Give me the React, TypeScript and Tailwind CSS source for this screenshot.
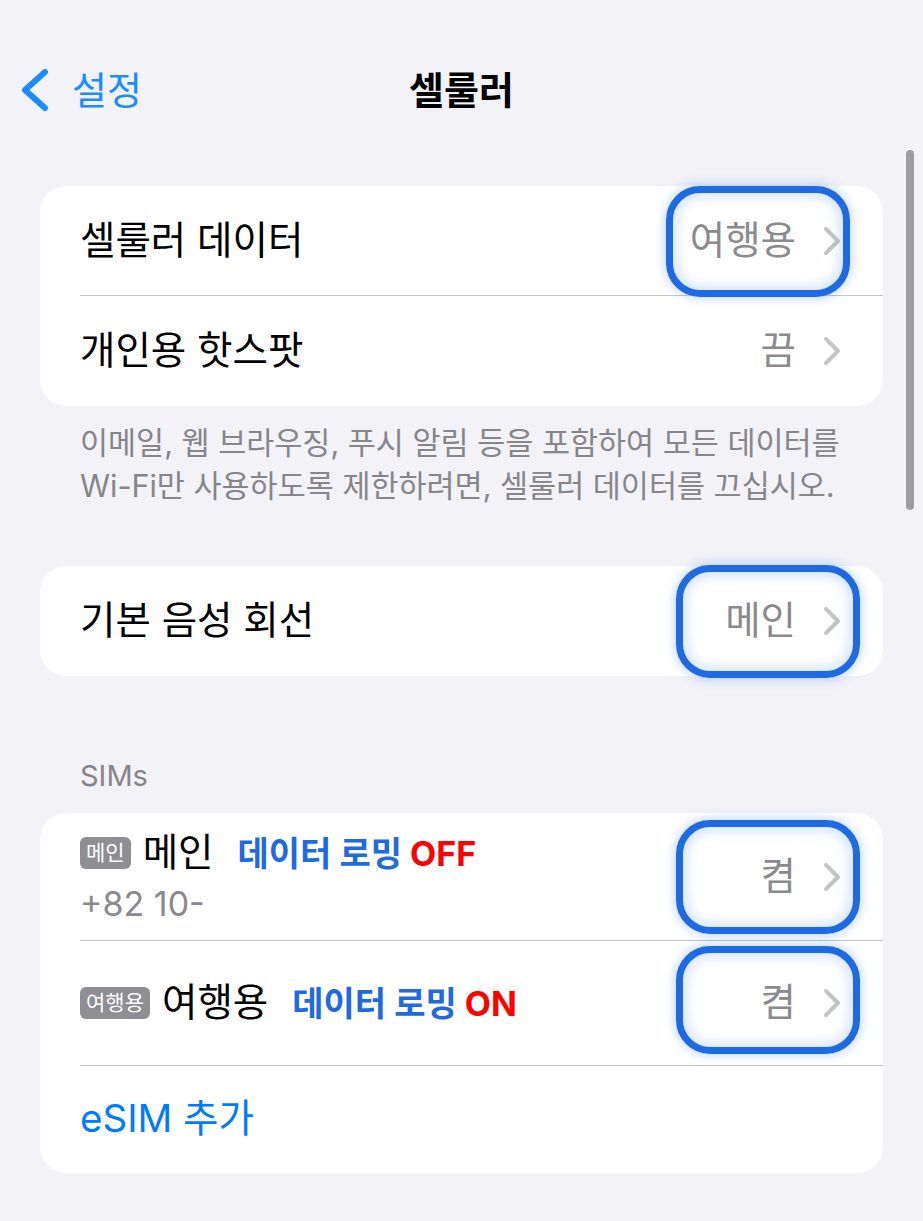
import { ReactNode } from 'react';

const font = { fontFamily: "Inter, 'Noto Sans CJK KR', sans-serif" };

function Chevron() {
  return (
    <svg width="20" height="32" viewBox="0 0 20 32" className="shrink-0">
      <path d="M4 4 L16 16 L4 28" fill="none" stroke="#c4c4c7" strokeWidth="4" strokeLinecap="round" strokeLinejoin="round" />
    </svg>
  );
}

function Highlight({ className }: { className: string }) {
  return (
    <div
      className={`pointer-events-none absolute rounded-[34px] border-[7px] border-[#1f6ae0] shadow-[0_0_12px_rgba(31,106,224,0.35),inset_0_0_16px_rgba(31,106,224,0.3)] ${className}`}
    />
  );
}

function Row({ label, value, highlight, divider, height = 'h-[110px]' }: { label: ReactNode; value?: string; highlight?: string; divider?: boolean; height?: string }) {
  return (
    <div className={`relative flex items-center ${height}`}>
      <div className="flex-1 pl-10 text-[38.5px] text-black">{label}</div>
      {value && (
        <div className="flex items-center gap-[26px] pr-[41px]">
          <span className="text-[38.5px] text-[#8a8a8e]">{value}</span>
          <Chevron />
        </div>
      )}
      {divider && <div className="absolute bottom-0 left-10 right-0 h-px bg-[#c6c6c8]" />}
      {highlight && <Highlight className={highlight} />}
    </div>
  );
}

function Badge({ children }: { children: string }) {
  return (
    <span className="mr-3 inline-flex h-8 items-center rounded-md bg-[#8e8e93] px-[6px] text-[21px] text-white">{children}</span>
  );
}

function Roaming({ state }: { state: string }) {
  return (
    <span className="ml-6 text-[34px] font-bold text-[#1f6ae0]">
      데이터 로밍 <span className="text-[#ff0000]">{state}</span>
    </span>
  );
}

export default function App() {
  return (
    <div style={font} className="relative min-h-[1221px] w-[923px] overflow-hidden bg-[#f2f2f7]">
      <div className="relative flex h-[180px] items-center">
        <div className="flex items-center gap-[18px] pl-[20px] text-[#1a8cff]">
          <svg width="34" height="48" viewBox="0 0 34 48">
            <path d="M25 6 L5 24 L25 42" fill="none" stroke="#1a8cff" strokeWidth="6" strokeLinecap="round" strokeLinejoin="round" />
          </svg>
          <span className="text-[38px]">설정</span>
        </div>
        <div className="absolute left-0 right-0 text-center text-[38px] font-bold text-black">셀룰러</div>
      </div>

      <div className="mx-10 mt-[6px] rounded-[26px] bg-white">
        <Row label="셀룰러 데이터" value="여행용" divider highlight="right-[33px] top-0 h-[111px] w-[184px]" />
        <Row label="개인용 핫스팟" value="끔" />
      </div>
      <p className="px-20 pt-[15px] text-[30.5px] leading-[43px] text-[#85858a]">
        이메일, 웹 브라우징, 푸시 알림 등을 포함하여 모든 데이터를
        <br />
        Wi-Fi만 사용하도록 제한하려면, 셀룰러 데이터를 끄십시오.
      </p>

      <div className="mx-10 mt-[59px] rounded-[26px] bg-white">
        <Row label="기본 음성 회선" value="메인" highlight="-top-px right-[23px] h-[113px] w-[184px]" />
      </div>

      <div className="px-20 pt-[78px] pb-[15px] text-[29px] text-[#85858a]">SIMs</div>

      <div className="mx-10 rounded-[26px] bg-white">
        <Row
          height="h-[128px]"
          divider
          value="켬"
          highlight="right-[23px] top-[7px] h-[114px] w-[184px]"
          label={
            <div className="flex flex-col">
              <div className="flex items-center">
                <Badge>메인</Badge>
                <span>메인</span>
                <Roaming state="OFF" />
              </div>
              <span className="-mt-1 text-[34px] text-[#8a8a8e]">+82 10-</span>
            </div>
          }
        />
        <Row
          height="h-[125px]"
          divider
          value="켬"
          highlight="right-[23px] top-[5px] h-[108px] w-[184px]"
          label={
            <div className="flex items-center">
              <Badge>여행용</Badge>
              <span>여행용</span>
              <Roaming state="ON" />
            </div>
          }
        />
        <Row height="h-[107px]" label={<span className="text-[#007aff]">eSIM 추가</span>} />
      </div>

      <div className="absolute left-[906px] top-[150px] h-[360px] w-[8px] rounded-full bg-[#9e9e9e]" />
    </div>
  );
}
